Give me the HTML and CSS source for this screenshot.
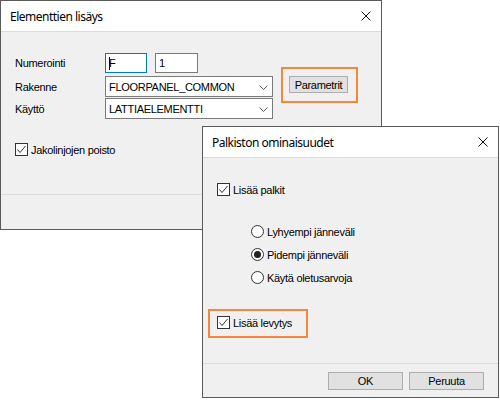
FILE: index.html
```html
<!DOCTYPE html>
<html lang="fi">
<head>
  <meta charset="UTF-8" />
  <title>Elementtien lisäys</title>
  <link rel="stylesheet" href="styles.css">
</head>
<body>

  <div class="desk">

    <!-- Main dialog -->
    <div class="dialog dlg-main">
      <div class="titlebar">
        <span>Elementtien lisäys</span>
        <svg class="close" width="10" height="10" viewBox="0 0 10 10"><path d="M0.5 0.5L9.5 9.5M9.5 0.5L0.5 9.5" stroke="#111" stroke-width="1"/></svg>
      </div>
      <div class="body main-body">
        <div class="row r-num">
          <span class="lbl">Numerointi</span>
          <div class="field short focused"><span class="caret"></span>F</div>
          <div class="field short">1</div>
        </div>
        <div class="row r-rak">
          <span class="lbl">Rakenne</span>
          <div class="field select">FLOORPANEL_COMMON
            <svg class="chev" width="9" height="5" viewBox="0 0 9 5"><path d="M0.5 0.5L4.5 4.5L8.5 0.5" fill="none" stroke="#555"/></svg>
          </div>
          <div class="mark mark-btn">
            <button class="btn btn-small">Parametrit</button>
          </div>
        </div>
        <div class="row r-kay">
          <span class="lbl">Käyttö</span>
          <div class="field select">LATTIAELEMENTTI
            <svg class="chev" width="9" height="5" viewBox="0 0 9 5"><path d="M0.5 0.5L4.5 4.5L8.5 0.5" fill="none" stroke="#555"/></svg>
          </div>
        </div>
        <div class="check r-jako">
          <span class="box"><svg width="11" height="11" viewBox="0 0 11 11"><path d="M1.5 5.5L4 8.5L9.5 2" fill="none" stroke="#333" stroke-width="1"/></svg></span>
          <span>Jakolinjojen poisto</span>
        </div>
      </div>
      <div class="footer"></div>
    </div>

    <!-- Beam properties dialog -->
    <div class="dialog dlg-beam">
      <div class="titlebar">
        <span>Palkiston ominaisuudet</span>
        <svg class="close" width="10" height="10" viewBox="0 0 10 10"><path d="M0.5 0.5L9.5 9.5M9.5 0.5L0.5 9.5" stroke="#111" stroke-width="1"/></svg>
      </div>
      <div class="body beam-body">
        <div class="check c-palkit">
          <span class="box"><svg width="11" height="11" viewBox="0 0 11 11"><path d="M1.5 5.5L4 8.5L9.5 2" fill="none" stroke="#333" stroke-width="1"/></svg></span>
          <span>Lisää palkit</span>
        </div>
        <div class="radios">
          <div class="radio"><span class="dot"></span><span>Lyhyempi jänneväli</span></div>
          <div class="radio on"><span class="dot"></span><span>Pidempi jänneväli</span></div>
          <div class="radio"><span class="dot"></span><span>Käytä oletusarvoja</span></div>
        </div>
        <div class="mark mark-check">
          <div class="check">
            <span class="box"><svg width="11" height="11" viewBox="0 0 11 11"><path d="M1.5 5.5L4 8.5L9.5 2" fill="none" stroke="#333" stroke-width="1"/></svg></span>
            <span>Lisää levytys</span>
          </div>
        </div>
      </div>
      <div class="footer beam-footer">
        <button class="btn">OK</button>
        <button class="btn">Peruuta</button>
      </div>
    </div>

  </div>

</body>
</html>
```

FILE: styles.css
```css
body {
  margin: 0;
  background: #fff;
  font-family: "Liberation Sans", Arial, sans-serif;
  font-size: 11px;
  letter-spacing: -0.3px;
  color: #000;
}
.desk {
  position: relative;
  width: 500px;
  height: 400px;
  overflow: hidden;
}
.dialog {
  position: absolute;
  box-sizing: border-box;
  border: 1px solid #5a5a5a;
  background: #f0f0f0;
  display: flex;
  flex-direction: column;
}
.dlg-main {
  left: 0;
  top: 0;
  width: 382px;
  height: 230px;
}
.dlg-beam {
  left: 202px;
  top: 126px;
  width: 297px;
  height: 272px;
}
.titlebar {
  height: 30px;
  flex: none;
  background: #fff;
  border-bottom: 1px solid #dcdcdc;
  display: flex;
  align-items: center;
  justify-content: space-between;
  padding: 0 10px 0 9px;
  font-family: "Noto Sans", sans-serif;
  font-size: 12px;
  letter-spacing: -0.5px;
}
.body {
  display: flex;
  flex-direction: column;
  box-sizing: border-box;
  flex: none;
}
.main-body {
  height: 162px;
  padding: 21px 0 0 14px;
}
.beam-body {
  height: 205px;
  padding: 25px 0 0 14px;
}
.footer {
  flex: 1;
  border-top: 1px solid #dcdcdc;
}
.beam-footer {
  display: flex;
  justify-content: flex-end;
  align-items: flex-start;
  gap: 6px;
  padding: 8px 14px 0 0;
}
.row {
  display: flex;
  align-items: center;
}
.lbl {
  width: 90px;
}
.r-num { height: 20px; }
.r-num .field + .field { margin-left: 8px; }
.r-rak { height: 21px; margin-top: 3px; }
.r-kay { height: 21px; margin-top: 1px; }
.field {
  box-sizing: border-box;
  height: 100%;
  background: #fff;
  border: 1px solid #7a7a7a;
  display: flex;
  align-items: center;
  padding-left: 3px;
  position: relative;
}
.short { width: 42px; }
.short + .short { width: 43px; }
.focused {
  border-color: #0078d7;
}
.caret {
  width: 1px;
  height: 13px;
  background: #000;
  position: absolute;
  left: 3px;
}
.select {
  width: 168px;
}
.chev {
  position: absolute;
  right: 4px;
  top: 8px;
}
.mark {
  border: 2px solid #f5863c;
  box-sizing: border-box;
}
.mark-btn {
  width: 77px;
  height: 36px;
  margin: -9px 0 -6px 8px;
  padding: 7px 0 0 6px;
}
.btn {
  box-sizing: border-box;
  width: 75px;
  height: 18px;
  padding: 0;
  border: 1px solid #adadad;
  background: #e1e1e1;
  font-family: "Liberation Sans", Arial, sans-serif;
  font-size: 11px;
  letter-spacing: -0.3px;
  color: #000;
}
.btn-small {
  width: 59px;
  height: 17px;
}
.check {
  display: flex;
  align-items: center;
  height: 13px;
  gap: 3px;
}
.box {
  box-sizing: border-box;
  width: 13px;
  height: 13px;
  border: 1px solid #333;
  background: #fff;
  display: flex;
  flex: none;
}
.r-jako { margin-top: 24px; }
.radios {
  display: flex;
  flex-direction: column;
  margin: 29px 0 0 34px;
  gap: 10px;
}
.radio {
  display: flex;
  align-items: center;
  height: 13px;
  gap: 3px;
}
.dot {
  box-sizing: border-box;
  width: 13px;
  height: 13px;
  border: 1px solid #333;
  border-radius: 50%;
  background: #fff;
  display: flex;
  align-items: center;
  justify-content: center;
}
.radio.on .dot::after {
  content: "";
  width: 7px;
  height: 7px;
  border-radius: 50%;
  background: #222;
}
.mark-check {
  width: 100px;
  height: 29px;
  margin: 25px 0 0 -9px;
  padding: 5px 0 0 7px;
}
```
